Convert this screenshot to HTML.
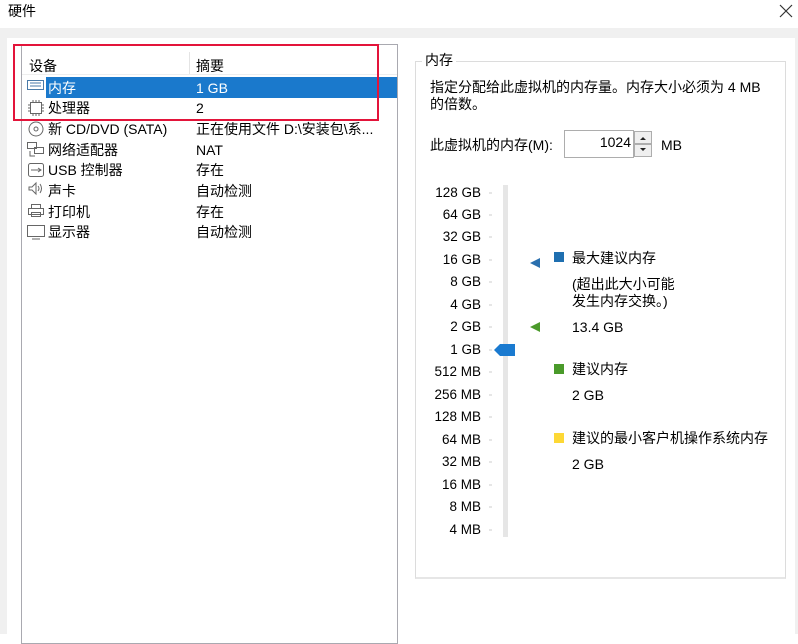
<!DOCTYPE html>
<html><head><meta charset="utf-8"><style>
*{margin:0;padding:0;box-sizing:border-box}
body{width:798px;height:634px;overflow:hidden;background:#fff;font-family:"Liberation Sans","Noto Sans CJK SC",sans-serif;font-size:14px;color:#000;position:relative}
.a{position:absolute;white-space:nowrap;line-height:16px}
.r{text-align:right;width:70px;font-size:13.5px}
</style></head><body>
<div class="a" style="left:8px;top:3px;font-size:14px">硬件</div>
<svg class="a" style="left:779px;top:4px" width="14" height="14"><path d="M1 1L13 13M13 1L1 13" stroke="#333" stroke-width="1.2"/></svg>
<div class="a" style="left:0;top:28px;width:798px;height:606px;background:#f0f0f0"></div>
<div class="a" style="left:7px;top:38px;width:788px;height:596px;background:#fff"></div>
<div class="a" style="left:21px;top:44px;width:377px;height:600px;border:1px solid #a9a9b0;background:#fff"></div>
<div class="a" style="left:189px;top:52px;width:1px;height:22px;background:#e4e4e4"></div>
<div class="a" style="left:22px;top:74px;width:375px;height:1px;background:#eee"></div>
<div class="a" style="left:46px;top:77px;width:351px;height:21px;background:#1a79cc"></div>
<div class="a" style="left:29px;top:58px">设备</div>
<div class="a" style="left:196px;top:58px">摘要</div>
<div class="a" style="left:48px;top:80px;color:#fff">内存</div><div class="a" style="left:196px;top:80px;color:#fff">1 GB</div>
<div class="a" style="left:48px;top:100px">处理器</div><div class="a" style="left:196px;top:100px">2</div>
<div class="a" style="left:48px;top:121px">新 CD/DVD (SATA)</div><div class="a" style="left:196px;top:121px">正在使用文件 D:\安装包\系...</div>
<div class="a" style="left:48px;top:142px">网络适配器</div><div class="a" style="left:196px;top:142px">NAT</div>
<div class="a" style="left:48px;top:162px">USB 控制器</div><div class="a" style="left:196px;top:162px">存在</div>
<div class="a" style="left:48px;top:183px">声卡</div><div class="a" style="left:196px;top:183px">自动检测</div>
<div class="a" style="left:48px;top:204px">打印机</div><div class="a" style="left:196px;top:204px">存在</div>
<div class="a" style="left:48px;top:224px">显示器</div><div class="a" style="left:196px;top:224px">自动检测</div>
<svg class="a" style="left:26px;top:78px" width="20" height="180" fill="none" stroke="#666" stroke-width="1">
<rect x="1.5" y="2.5" width="16" height="9" stroke="#4a7aa8"/><path d="M4 5h11M4 8h11" stroke="#4a7aa8"/>
<rect x="4.5" y="24.5" width="11" height="11"/><path d="M2 27h2M2 30h2M2 33h2M16 27h2M16 30h2M16 33h2M7 22v2M10 22v2M13 22v2M7 36v2M10 36v2M13 36v2"/>
<circle cx="10" cy="51" r="7"/><circle cx="10" cy="51" r="2"/>
<rect x="1.5" y="64.5" width="9" height="6"/><rect x="8.5" y="69.5" width="9" height="6"/><path d="M4 73v5h5"/>
<rect x="2.5" y="85.5" width="15" height="13" rx="2"/><path d="M5 92h10M12 90l3 2-3 2"/>
<path d="M3 109h3l4-4v11l-4-4H3z M12 108q2 2.5 0 5M14 106q3 4.5 0 9"/>
<rect x="2.5" y="130.5" width="15" height="6"/><rect x="5.5" y="126.5" width="9" height="4"/><rect x="5.5" y="134.5" width="9" height="4"/>
<rect x="1.5" y="147.5" width="17" height="11"/><path d="M6 161h8"/>
</svg>
<div class="a" style="left:13px;top:44px;width:366px;height:77px;border:2px solid #e3143a"></div>
<div class="a" style="left:415px;top:61px;width:371px;height:518px;border:1px solid #dcdcdc;border-bottom:2px solid #e6e6e6"></div>
<div class="a" style="left:422px;top:52px;background:#fff;padding:0 3px">内存</div>
<div class="a" style="left:430px;top:79px">指定分配给此虚拟机的内存量。内存大小必须为 4 MB</div>
<div class="a" style="left:430px;top:96px">的倍数。</div>
<div class="a" style="left:430px;top:137px">此虚拟机的内存(M):</div>
<div class="a" style="left:564px;top:130px;width:70px;height:28px;border:1px solid #adadad"></div>
<div class="a" style="left:564px;top:134px;width:67px;text-align:right">1024</div>
<div class="a" style="left:634px;top:131px;width:18px;height:13px;border:1px solid #adadad;background:#efefef"></div>
<div class="a" style="left:634px;top:144px;width:18px;height:13px;border:1px solid #adadad;background:#efefef"></div>
<svg class="a" style="left:634px;top:131px" width="18" height="26"><path d="M6 9l3-3 3 3z M6 17l3 3 3-3z" fill="#222"/></svg>
<div class="a" style="left:661px;top:137px">MB</div>
<div class="a" style="left:503px;top:185px;width:5px;height:352px;background:#e6e6e6"></div>
<div class="a r" style="left:411px;top:185px">128 GB</div>
<div class="a r" style="left:411px;top:207px">64 GB</div>
<div class="a r" style="left:411px;top:229px">32 GB</div>
<div class="a r" style="left:411px;top:252px">16 GB</div>
<div class="a r" style="left:411px;top:274px">8 GB</div>
<div class="a r" style="left:411px;top:297px">4 GB</div>
<div class="a r" style="left:411px;top:319px">2 GB</div>
<div class="a r" style="left:411px;top:342px">1 GB</div>
<div class="a r" style="left:411px;top:364px">512 MB</div>
<div class="a r" style="left:411px;top:387px">256 MB</div>
<div class="a r" style="left:411px;top:409px">128 MB</div>
<div class="a r" style="left:411px;top:432px">64 MB</div>
<div class="a r" style="left:411px;top:454px">32 MB</div>
<div class="a r" style="left:411px;top:477px">16 MB</div>
<div class="a r" style="left:411px;top:499px">8 MB</div>
<div class="a r" style="left:411px;top:522px">4 MB</div>
<svg class="a" style="left:488px;top:180px" width="60" height="360">
<g stroke="#ccc"><path d="M1 13h3M1 35h3M1 57h3M1 80h3M1 102h3M1 125h3M1 147h3M1 170h3M1 192h3M1 215h3M1 237h3M1 260h3M1 282h3M1 305h3M1 327h3M1 350h3"/></g>
<path d="M6 170l6-6h15v12H12z" fill="#1a7ad0"/>
<path d="M42 83l10-5v10z" fill="#2a6fae"/>
<path d="M42 147l10-5v10z" fill="#4b9a2b"/>
</svg>
<div class="a" style="left:554px;top:252px;width:10px;height:10px;background:#1f6fb0"></div>
<div class="a" style="left:572px;top:250px">最大建议内存</div>
<div class="a" style="left:572px;top:276px">(超出此大小可能</div>
<div class="a" style="left:572px;top:293px">发生内存交换。)</div>
<div class="a" style="left:572px;top:319px">13.4 GB</div>
<div class="a" style="left:554px;top:364px;width:10px;height:10px;background:#4a9a2a"></div>
<div class="a" style="left:572px;top:361px">建议内存</div>
<div class="a" style="left:572px;top:387px">2 GB</div>
<div class="a" style="left:554px;top:433px;width:10px;height:10px;background:#fdd835"></div>
<div class="a" style="left:572px;top:430px">建议的最小客户机操作系统内存</div>
<div class="a" style="left:572px;top:456px">2 GB</div>
</body></html>
